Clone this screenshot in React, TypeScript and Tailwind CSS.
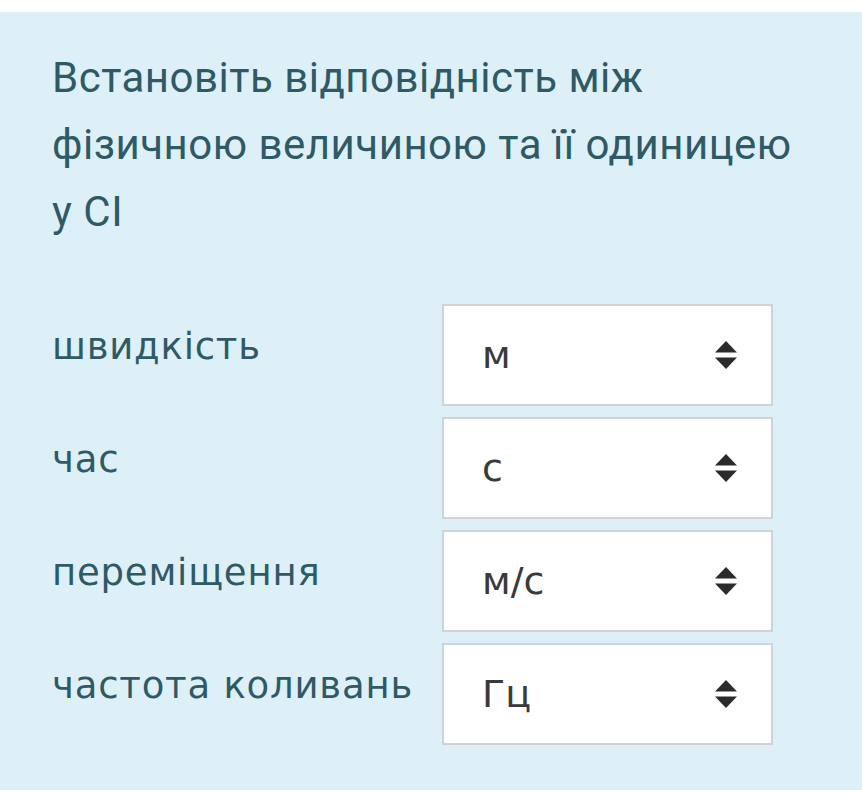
import React from 'react';

const rows = [
  { label: 'швидкість', value: 'м' },
  { label: 'час', value: 'с' },
  { label: 'переміщення', value: 'м/с' },
  { label: 'частота коливань', value: 'Гц' },
];

const SortIcon: React.FC = () => (
  <svg width="22" height="28" viewBox="0 0 22 28" className="shrink-0">
    <path d="M11 0 L22 11.5 L0 11.5 Z" fill="#2b2b2b" />
    <path d="M0 16.5 L22 16.5 L11 28 Z" fill="#2b2b2b" />
  </svg>
);

export default function App() {
  return (
    <div className="w-[862px] h-[801px] bg-white pt-[12px] font-['Roboto',sans-serif]">
      <div className="h-[778px] bg-[#def0f7] px-[52px] pt-[32px]">
        <h2 className="w-[750px] text-[42px] leading-[67px] text-[#2e5a66] font-normal tracking-[0.5px]">
          Встановіть відповідність між фізичною величиною та її одиницею у СІ
        </h2>
        <div className="mt-[59px] flex flex-col gap-[11px]">
          {rows.map((r) => (
            <div key={r.label} className="flex">
              <div className="w-[390px] pt-[21px] text-[37px] leading-[44px] tracking-[0.8px] text-[#2e5a66] font-['DejaVu_Sans',sans-serif]">{r.label}</div>
              <div className="w-[331px] h-[102px] bg-white border-2 border-[#cdd3d6] flex items-center justify-between pl-[38px] pr-[34px]">
                <span className="text-[38px] leading-none text-[#3a3a3a] font-['DejaVu_Sans',sans-serif]">{r.value}</span>
                <SortIcon />
              </div>
            </div>
          ))}
        </div>
      </div>
    </div>
  );
}
